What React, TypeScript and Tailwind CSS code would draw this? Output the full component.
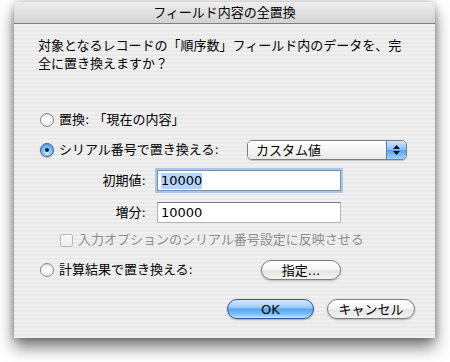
import React from "react"

const font = "font-['DejaVu_Sans','Noto_Sans_CJK_JP',sans-serif]"

function Radio({ checked = false }: { checked?: boolean }) {
  if (checked) {
    return (
      <span className="flex h-[14px] w-[14px] shrink-0 items-center justify-center rounded-full border border-[#3b5f97] bg-[radial-gradient(circle_at_50%_70%,#d7f0ff_0%,#7dbef5_45%,#3e8ae0_100%)] shadow-[0_1px_1px_rgba(0,0,0,0.25)]">
        <span className="h-[4px] w-[4px] rounded-full bg-[#0d1f3c]" />
      </span>
    )
  }
  return (
    <span className="h-[14px] w-[14px] shrink-0 rounded-full border border-[#8a8a8a] bg-[linear-gradient(180deg,#f4f4f4_0%,#ffffff_50%,#e6e6e6_100%)] shadow-[inset_0_1px_1px_rgba(0,0,0,0.15)]" />
  )
}

function AquaButton({ label, width, primary = false }: { label: string; width: string; primary?: boolean }) {
  const base = "flex h-[20px] items-center justify-center rounded-full text-[13px] leading-none " + width
  if (primary) {
    return (
      <div
        className={
          base +
          " border border-[#35559a] bg-[linear-gradient(180deg,#d6ecff_0%,#9cccf6_40%,#5aa5ee_52%,#7cc1fa_80%,#c4ecff_100%)] text-black shadow-[0_1px_2px_rgba(0,0,0,0.3)]"
        }
      >
        {label}
      </div>
    )
  }
  return (
    <div
      className={
        base +
        " border border-[#7d7d7d] bg-[linear-gradient(180deg,#ffffff_0%,#f6f6f6_45%,#e4e4e4_55%,#f4f4f4_100%)] text-black shadow-[0_1px_2px_rgba(0,0,0,0.25)]"
      }
    >
      {label}
    </div>
  )
}

export default function App() {
  return (
    <div className={"h-[362px] w-[450px] overflow-hidden bg-white pl-[14px] pt-[2px] text-black " + font}>
      <div className="flex h-[336px] w-[421px] flex-col overflow-hidden rounded-t-[6px] shadow-[0_9px_16px_rgba(0,0,0,0.55),0_0_6px_rgba(0,0,0,0.25)]">
        {/* title bar */}
        <div className="flex h-[22px] shrink-0 items-center justify-center border-b border-[#7f7f7f] bg-[linear-gradient(180deg,#eeeeee_0%,#e0e0e0_50%,#d2d2d2_100%)] text-[13px] leading-none">
          フィールド内容の全置換
        </div>

        <div className="flex flex-1 flex-col bg-[repeating-linear-gradient(180deg,#f0f0f0_0px,#f0f0f0_2px,#e9e9e9_2px,#e9e9e9_4px)]">
          <div className="ml-[24px] mt-[13px] text-[13px] leading-[18px]">
            <div>対象となるレコードの「順序数」フィールド内のデータを、完</div>
            <div>全に置き換えますか？</div>
          </div>

          {/* radio 1 */}
          <div className="ml-[26px] mt-[37px] flex h-[20px] items-center gap-[5px] text-[13px]">
            <Radio />
            <span>置換: 「現在の内容」</span>
          </div>

          {/* radio 2 + popup */}
          <div className="ml-[26px] mt-[10px] flex h-[20px] items-center text-[13px]">
            <div className="flex w-[207px] items-center gap-[5px]">
              <Radio checked />
              <span>シリアル番号で置き換える:</span>
            </div>
            <div className="flex h-[20px] w-[160px] overflow-hidden rounded-[5px] border border-[#7d7d7d] shadow-[0_1px_1px_rgba(0,0,0,0.2)]">
              <div className="flex flex-1 items-center bg-[linear-gradient(180deg,#ffffff_0%,#f5f5f5_50%,#e8e8e8_100%)] pl-[8px] leading-none">
                カスタム値
              </div>
              <div className="flex w-[20px] flex-col items-center justify-center gap-[2px] border-l border-[#5a7fb8] bg-[linear-gradient(180deg,#cde6fd_0%,#86bff5_48%,#5aa3ec_52%,#9ed3fd_100%)]">
                <svg width="7" height="4" viewBox="0 0 7 4">
                  <path d="M3.5 0 L7 4 L0 4 Z" fill="#111" />
                </svg>
                <svg width="7" height="4" viewBox="0 0 7 4">
                  <path d="M0 0 L7 0 L3.5 4 Z" fill="#111" />
                </svg>
              </div>
            </div>
          </div>

          {/* initial value */}
          <div className="mt-[10px] flex h-[21px] items-center text-[13px]">
            <div className="w-[132px] text-right">初期値:</div>
            <div className="ml-[11px] flex h-[21px] w-[184px] items-center border border-[#7a8ea8] bg-white pl-[3px] shadow-[0_0_0_2px_#a7c7ee]">
              <span className="bg-[#b5d5ff] leading-[16px]">10000</span>
            </div>
          </div>

          {/* increment */}
          <div className="mt-[11px] flex h-[21px] items-center text-[13px]">
            <div className="w-[132px] text-right">増分:</div>
            <div className="ml-[11px] flex h-[21px] w-[184px] items-center border border-[#b4b4b4] border-t-[#7a7a7a] bg-white pl-[3px]">
              10000
            </div>
          </div>

          {/* checkbox */}
          <div className="ml-[46px] mt-[10px] flex h-[14px] items-center gap-[5px] text-[13px] text-[#8e8e8e]">
            <span className="h-[13px] w-[13px] shrink-0 rounded-[2px] border border-[#b9b9b9] bg-[linear-gradient(180deg,#fafafa,#ececec)]" />
            <span>入力オプションのシリアル番号設定に反映させる</span>
          </div>

          {/* radio 3 */}
          <div className="ml-[26px] mt-[13px] flex h-[20px] items-center text-[13px]">
            <div className="flex w-[221px] items-center gap-[5px]">
              <Radio />
              <span>計算結果で置き換える:</span>
            </div>
            <AquaButton label="指定..." width="w-[80px]" />
          </div>

          {/* buttons */}
          <div className="ml-[213px] mt-[19px] flex h-[20px] items-center gap-[13px]">
            <AquaButton label="OK" width="w-[87px]" primary />
            <AquaButton label="キャンセル" width="w-[88px]" />
          </div>
        </div>
      </div>
    </div>
  )
}
